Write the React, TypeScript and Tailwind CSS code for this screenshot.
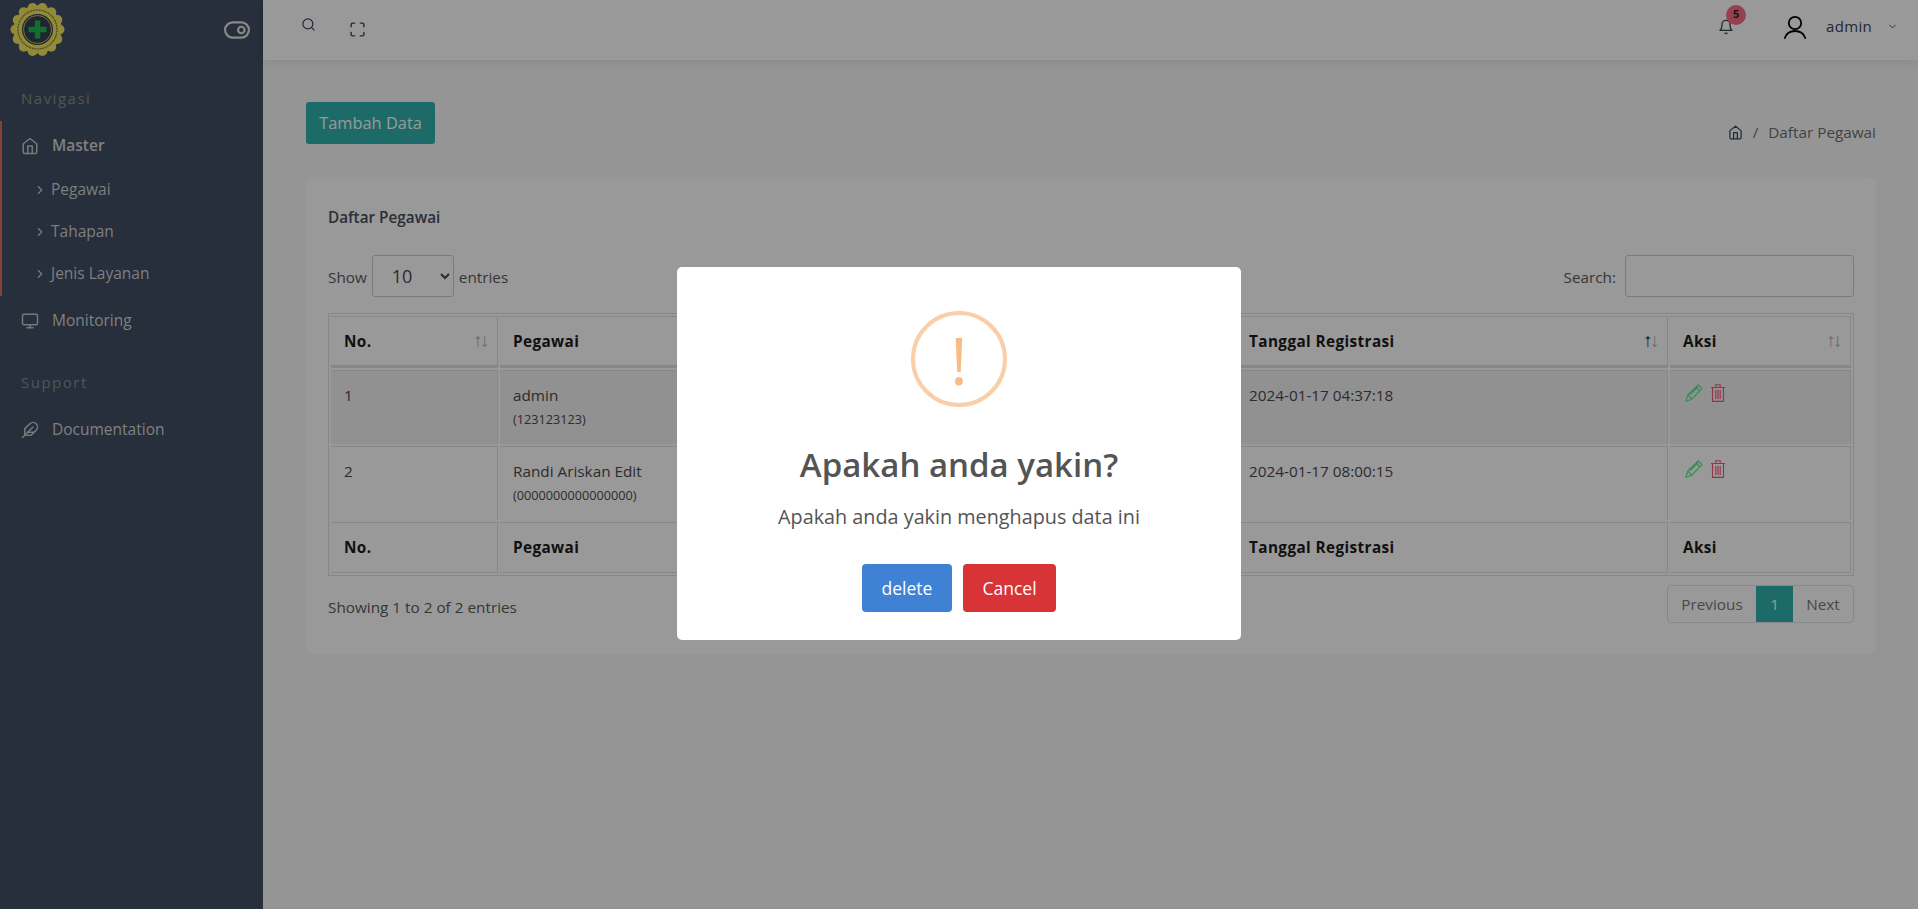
import { FiBell, FiChevronDown, FiChevronRight, FiFeather, FiHome, FiMaximize, FiMonitor, FiSearch, FiToggleRight } from "react-icons/fi";

const rows = [
  { no: "1", name: "admin", nip: "(123123123)", date: "2024-01-17 04:37:18", striped: true },
  { no: "2", name: "Randi Ariskan Edit", nip: "(0000000000000000)", date: "2024-01-17 08:00:15", striped: false },
];

function Logo() {
  const scallops = Array.from({ length: 14 }, (_, i) => {
    const a = (i / 14) * Math.PI * 2;
    return { cx: 37.5 + Math.cos(a) * 22, cy: 29.500 + Math.sin(a) * 22 };
  });
  return (
    <svg width="74" height="60" viewBox="0 0 74 60">
      <circle cx="37.500" cy="29.500" r="24" fill="#f2e660" />
      {scallops.map((s, i) => (
        <circle key={i} cx={s.cx} cy={s.cy} r="5" fill="#f2e660" />
      ))}
      <circle cx="37.500" cy="29.500" r="19.500" fill="none" stroke="#55552a" strokeWidth="1.200" strokeDasharray="0.9 0.7" />
      <circle cx="37.500" cy="29.500" r="15.500" fill="#34404f" />
      <circle cx="37.500" cy="29.500" r="14" fill="none" stroke="#f2e660" strokeWidth="0.800" />
      <path d="M34.800 20.500h5.400v6.300h6.300v5.400h-6.300v6.300h-5.400v-6.300h-6.300v-5.400h6.300z" fill="#21b753" />
    </svg>
  );
}

function UserIcon() {
  return (
    <svg width="24" height="24" viewBox="0 0 24 24" fill="none" stroke="#000" strokeWidth="1.800" strokeLinecap="round" className="mr-[19px]">
      <circle cx="12" cy="8" r="6.200" />
      <path d="M1.800 23c1.500-4.500 5.500-7 10.200-7s8.700 2.500 10.200 7" />
    </svg>
  );
}

function PencilIcon() {
  return (
    <svg width="18" height="18" viewBox="0 0 18 18" fill="none" stroke="#5ce98e" strokeWidth="1.200" strokeLinejoin="round">
      <path d="M1 17.200 2.800 11 13.200 1l3.800 3.600L6.800 15.200Z" />
      <path d="M2.800 11 6.800 15.200M11 3.200l3.800 3.700M5 10.500l8-7.700" />
    </svg>
  );
}

function TrashIcon() {
  return (
    <svg width="14" height="18" viewBox="0 0 14 18" fill="none" stroke="#ff5572" strokeWidth="1.100">
      <path d="M0 3.500h14M4.800 3.500V.8h4.400v2.700M1.500 3.500v13.900h11V3.500" />
      <path d="M4.800 6v9M7 6v9M9.200 6v9" />
    </svg>
  );
}

function SideItem({ icon, label, bold, tall }: { icon: React.ReactNode; label: string; bold?: boolean; tall?: boolean }) {
  return (
    <div className={`flex items-center pl-[21px] text-[15.500px] text-[#d6d6d6] ${tall ? "h-[48px] pt-[3px]" : "h-[42px]"}`}>
      <span className="w-[31px] text-[#c9c9c9]">{icon}</span>
      <span className={bold ? "font-semibold" : "font-medium"}>{label}</span>
    </div>
  );
}

function SubItem({ label }: { label: string }) {
  return (
    <div className="flex h-[42px] items-center pl-[33px] pt-[1px] text-[15.500px] text-[#d2d2d2]">
      <FiChevronRight className="mr-[4px] size-[14px]" />
      <span>{label}</span>
    </div>
  );
}

function Sort({ active }: { active?: boolean }) {
  return (
    <span className="absolute right-[7px] top-[11px] flex text-[19px] leading-[24px] font-normal">
      <span className={active ? "text-[#333]" : "text-[#b5b5b5]"}>↑</span>
      <span className="-ml-[3px] text-[#b5b5b5]">↓</span>
    </span>
  );
}

function HeadCell({ label, sort, active }: { label: string; sort?: boolean; active?: boolean }) {
  return (
    <th className="relative h-[52px] border border-b-[3px] border-l-0 border-[#dee2e6] pl-[13px] text-left text-[15.300px] font-bold tracking-[0.4px] text-[#1c1c1c]">
      {label}
      {sort ? <Sort active={active} /> : null}
    </th>
  );
}

function FootCell({ label }: { label: string }) {
  return (
    <th className="h-[51px] border border-l-0 border-[#dee2e6] pl-[13px] text-left text-[15.300px] font-bold tracking-[0.4px] text-[#1c1c1c]">
      {label}
    </th>
  );
}

export default function App() {
  const bodyCell = "h-[74px] border-t border-r border-[#dee2e6] pl-[13px] pt-[13px] align-top text-[15.300px] text-[#4a4a4a]";
  return (
    <div className="flex h-[909px] w-full overflow-hidden bg-[#f8f8fa] font-['Open_Sans',sans-serif] text-[15.300px] text-[#5a5a5a]">
      <aside className="w-[263px] shrink-0 bg-[#414d64]">
        <div className="flex h-[60px] items-center justify-between pr-[13px]">
          <Logo />
          <FiToggleRight className="size-[26px] text-[#e3e3e3]" />
        </div>
        <div className="pl-[21px] pt-[27px] text-[15px] tracking-[1.500px] text-[#8d8d8d]">Navigasi</div>
        <div className="mt-[11px] border-l-2 border-[#e0695f] pb-[1px]">
          <div className="-ml-[2px]">
            <SideItem icon={<FiHome className="size-[18px]" />} label="Master" bold tall />
            <SubItem label="Pegawai" />
            <SubItem label="Tahapan" />
            <SubItem label="Jenis Layanan" />
          </div>
        </div>
        <div className="mt-[4px]">
          <SideItem icon={<FiMonitor className="size-[18px]" />} label="Monitoring" />
        </div>
        <div className="pl-[21px] pt-[29px] text-[15px] tracking-[1.500px] text-[#8d8d8d]">Support</div>
        <div className="mt-[16px]">
          <SideItem icon={<FiFeather className="size-[18px]" />} label="Documentation" />
        </div>
      </aside>

      <div className="min-w-0 flex-1">
        <header className="flex h-[60px] items-center justify-between bg-white pl-[38px] pr-[20px] shadow-[0_2px_8px_rgba(0,0,0,0.08)]">
          <div className="flex items-center gap-[33px] text-[#3d4656]">
            <FiSearch className="-mt-[11px] size-[15px]" />
            <FiMaximize className="-mt-[2px] size-[17px]" />
          </div>
          <div className="-mt-[7px] flex items-center text-[#3d4656]">
            <div className="relative mr-[49px]">
              <FiBell className="size-[16px]" />
              <span className="absolute -right-[12px] -top-[14px] flex size-[20px] items-center justify-center rounded-full bg-[#fb6a84] text-[11px] font-bold text-[#1d2433]">5</span>
            </div>
            <UserIcon />
            <span className="text-[15px] tracking-[0.3px]">admin</span>
            <FiChevronDown className="ml-[15px] size-[11px]" />
          </div>
        </header>

        <main className="pl-[43px] pr-[42px] pt-[42px]">
          <div className="flex h-[42px] items-start justify-between">
            <button className="h-[42px] w-[129px] rounded-[3px] bg-[#30b2ae] text-[16.400px] text-[#fff]">Tambah Data</button>
            <div className="mt-[19px] flex items-center text-[#6f6f6f]">
              <FiHome className="size-[15px] text-[#3d4656]" />
              <span className="mx-[10px]">/</span>
              <span>Daftar Pegawai</span>
            </div>
          </div>

          <section className="mt-[33px] h-[477px] rounded-[8px] bg-white px-[22px] pt-[30px]">
            <h2 className="font-semibold leading-[20px] text-[#4a4e5c]">Daftar Pegawai</h2>
            <div className="mt-[28px] flex h-[42px] items-center justify-between">
              <div className="flex items-center">
                <span className="mt-[2px]">Show</span>
                <select className="mx-[5px] h-[42px] w-[82px] rounded-[3px] border border-[#cdcdcd] pl-[15px] text-[18px] text-[#4a4a4a]" defaultValue="10">
                  <option value="10">10</option>
                </select>
                <span className="mt-[2px]">entries</span>
              </div>
              <div className="flex items-center">
                <span className="mr-[9px] mt-[2px]">Search:</span>
                <input className="h-[42px] w-[229px] rounded-[3px] border border-[#cdcdcd]" />
              </div>
            </div>

            <table className="mt-[16px] w-[1526px] table-fixed border-separate border-spacing-[2px] border border-[#dee2e6]">
              <colgroup>
                <col className="w-[167px]" />
                <col className="w-[400px]" />
                <col className="w-[332px]" />
                <col className="w-[432px]" />
                <col className="w-[181px]" />
              </colgroup>
              <thead>
                <tr>
                  <HeadCell label="No." sort />
                  <HeadCell label="Pegawai" />
                  <HeadCell label="" />
                  <HeadCell label="Tanggal Registrasi" sort active />
                  <HeadCell label="Aksi" sort />
                </tr>
              </thead>
              <tbody>
                {rows.map((r) => (
                  <tr key={r.no} className={r.striped ? "bg-[#f2f2f2]" : ""}>
                    <td className={bodyCell}>{r.no}</td>
                    <td className={bodyCell}>
                      <div className="leading-[22px]">{r.name}</div>
                      <div className="mt-[2px] text-[12.700px] leading-[22px]">{r.nip}</div>
                    </td>
                    <td className={bodyCell}></td>
                    <td className={bodyCell}>{r.date}</td>
                    <td className={bodyCell}>
                      <div className="ml-[2px] flex items-center gap-[8px]">
                        <PencilIcon />
                        <TrashIcon />
                      </div>
                    </td>
                  </tr>
                ))}
              </tbody>
              <tfoot>
                <tr>
                  <FootCell label="No." />
                  <FootCell label="Pegawai" />
                  <FootCell label="" />
                  <FootCell label="Tanggal Registrasi" />
                  <FootCell label="Aksi" />
                </tr>
              </tfoot>
            </table>

            <div className="mt-[9px] flex items-center justify-between">
              <span className="mt-[7px]">Showing 1 to 2 of 2 entries</span>
              <div className="flex h-[38px] w-[187px] items-stretch overflow-hidden rounded-[4px] border border-[#dee2e6] text-[#787878]">
                <span className="flex w-[88px] items-center justify-center">Previous</span>
                <span className="flex w-[37px] items-center justify-center bg-[#30b2ae] text-white">1</span>
                <span className="flex flex-1 items-center justify-center">Next</span>
              </div>
            </div>
          </section>
        </main>
      </div>

      <div className="fixed inset-0 flex items-center justify-center bg-black/40">
        <div className="-mt-[2px] flex h-[373px] w-[564px] flex-col items-center rounded-[5px] bg-white pt-[44px]">
          <div className="flex size-[96px] items-center justify-center rounded-full border-4 border-[#facea8] text-[66px] leading-none font-normal text-[#f8bb86]">!</div>
          <h1 className="mt-[33px] text-[33px] font-semibold leading-[50px] text-[#545454]">Apakah anda yakin?</h1>
          <p className="mt-[13px] text-[19.800px] leading-[28px] text-[#545454]">Apakah anda yakin menghapus data ini</p>
          <div className="mt-[33px] flex gap-[11px]">
            <button className="h-[48px] w-[90px] rounded-[4px] bg-[#3f81d3] text-[17.500px] text-white">delete</button>
            <button className="h-[48px] w-[93px] rounded-[4px] bg-[#d83337] text-[17.500px] text-white">Cancel</button>
          </div>
        </div>
      </div>
    </div>
  );
}
